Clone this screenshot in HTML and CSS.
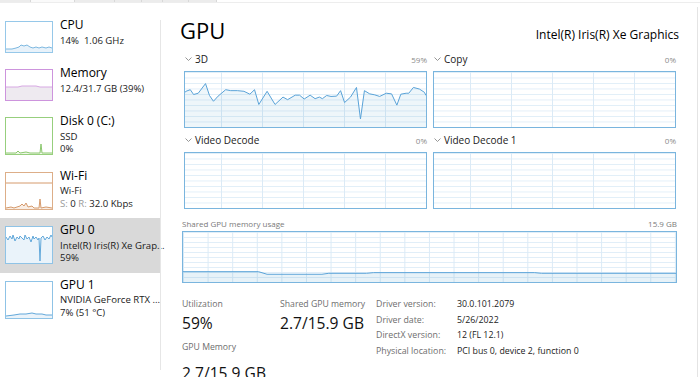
FILE: index.html
```html
<!DOCTYPE html>
<html lang="en">
<head>
    <meta charset="UTF-8">
    <meta name="viewport" content="width=device-width, initial-scale=1.0">
    <title>Task Manager - Performance - GPU</title>
    <link rel="stylesheet" href="styles.css">
</head>
<body>
    <div class="tabs">
        <span></span><span></span><span></span><span></span><span></span><span></span><span></span>
    </div>
    <div class="window">
        <aside class="sidebar">
            <ul class="perf-list">
                <li class="perf-item">
                    <div class="thumb thumb-cpu">
                        <svg viewBox="0 0 46 30" preserveAspectRatio="none">
                            <polygon class="fill" points="0,27 6,27 10,26 13,25 15,23 18,24 21,23 24,25 27,26 30,25 33,26 36,25 40,26 43,25 46,26 46,30 0,30"/>
                            <polyline class="line" points="0,27 6,27 10,26 13,25 15,23 18,24 21,23 24,25 27,26 30,25 33,26 36,25 40,26 43,25 46,26"/>
                        </svg>
                    </div>
                    <div class="perf-text">
                        <div class="perf-name">CPU</div>
                        <div class="perf-sub">14%&nbsp; 1.06 GHz</div>
                    </div>
                </li>
                <li class="perf-item">
                    <div class="thumb thumb-mem">
                        <svg viewBox="0 0 46 30" preserveAspectRatio="none">
                            <polygon class="fill" points="0,17 12,17 16,16 30,16 34,17 46,17 46,30 0,30"/>
                            <polyline class="line" points="0,17 12,17 16,16 30,16 34,17 46,17"/>
                        </svg>
                    </div>
                    <div class="perf-text">
                        <div class="perf-name">Memory</div>
                        <div class="perf-sub">12.4/31.7 GB (39%)</div>
                    </div>
                </li>
                <li class="perf-item tall">
                    <div class="thumb thumb-disk">
                        <svg viewBox="0 0 46 36" preserveAspectRatio="none">
                            <polygon class="fill" points="0,35 10,35 12,33 14,35 20,34 24,35 34,35 35,26 36,35 46,35 46,36 0,36"/>
                            <polyline class="line" points="0,35 10,35 12,33 14,35 20,34 24,35 34,35 35,26 36,35 46,35"/>
                        </svg>
                    </div>
                    <div class="perf-text">
                        <div class="perf-name">Disk 0 (C:)</div>
                        <div class="perf-sub">SSD</div>
                        <div class="perf-sub">0%</div>
                    </div>
                </li>
                <li class="perf-item tall">
                    <div class="thumb thumb-wifi">
                        <svg viewBox="0 0 46 36" preserveAspectRatio="none">
                            <line class="line" x1="0" y1="10" x2="46" y2="10"/>
                            <polygon class="fill" points="0,35 5,34 8,35 14,33 16,31 18,33 20,30 22,34 26,33 28,35 33,35 34,26 35,35 40,34 46,35 46,36 0,36"/>
                            <polyline class="line" points="0,35 5,34 8,35 14,33 16,31 18,33 20,30 22,34 26,33 28,35 33,35 34,26 35,35 40,34 46,35"/>
                        </svg>
                    </div>
                    <div class="perf-text">
                        <div class="perf-name">Wi-Fi</div>
                        <div class="perf-sub">Wi-Fi</div>
                        <div class="perf-sub"><span class="dim">S:</span> 0 <span class="dim">R:</span> 32.0 Kbps</div>
                    </div>
                </li>
                <li class="perf-item tall selected">
                    <div class="thumb thumb-gpu">
                        <svg viewBox="0 0 46 36" preserveAspectRatio="none">
                            <polygon class="fill" points="0,10 2,13 4,9 6,12 7,8 9,14 11,10 13,12 14,9 16,11 18,13 19,8 21,12 23,10 25,15 27,9 28,12 30,10 32,13 33,11 34,34 35,11 37,9 39,13 41,10 43,12 45,8 46,10 46,36 0,36"/>
                            <polyline class="line" points="0,10 2,13 4,9 6,12 7,8 9,14 11,10 13,12 14,9 16,11 18,13 19,8 21,12 23,10 25,15 27,9 28,12 30,10 32,13 33,11 34,34 35,11 37,9 39,13 41,10 43,12 45,8 46,10"/>
                        </svg>
                    </div>
                    <div class="perf-text">
                        <div class="perf-name">GPU 0</div>
                        <div class="perf-sub">Intel(R) Iris(R) Xe Grap...</div>
                        <div class="perf-sub">59%</div>
                    </div>
                </li>
                <li class="perf-item tall">
                    <div class="thumb thumb-gpu">
                        <svg viewBox="0 0 46 36" preserveAspectRatio="none">
                            <polygon class="fill" points="0,34 8,33 14,32 20,32 26,31 30,32 36,32 40,33 46,33 46,36 0,36"/>
                            <polyline class="line" points="0,34 8,33 14,32 20,32 26,31 30,32 36,32 40,33 46,33"/>
                        </svg>
                    </div>
                    <div class="perf-text">
                        <div class="perf-name">GPU 1</div>
                        <div class="perf-sub">NVIDIA GeForce RTX ...</div>
                        <div class="perf-sub">7% (51 °C)</div>
                    </div>
                </li>
            </ul>
        </aside>
        <div class="divider"></div>
        <main class="detail">
            <div class="head">
                <h1>GPU</h1>
                <span class="gpu-name">Intel(R) Iris(R) Xe Graphics</span>
            </div>
            <div class="charts">
                <div class="chart">
                    <div class="chart-head">
                        <svg class="chevron" viewBox="0 0 7 4"><path d="M0.5 0.5 L3.5 3.5 L6.5 0.5"/></svg>
                        <span class="chart-name">3D</span>
                        <span class="pct">59%</span>
                    </div>
                    <div class="graph">
                        <svg viewBox="72 212 728 171" preserveAspectRatio="none">
                            <polygon class="fill" points="72,275 75,272 88,267 98,282 112,278 134,248 146,285 158,303 172,287 195,267 210,270 230,270 250,272 268,281 282,267 295,313 320,272 344,313 368,290 382,298 405,284 418,284 432,296 450,284 465,295 478,290 487,295 500,285 513,288 530,287 542,270 554,307 572,290 590,260 602,358 614,270 630,280 645,283 660,288 680,278 696,280 712,315 724,281 740,278 748,278 762,260 780,265 795,275 800,285 800,383 72,383"/>
                            <polyline class="line" points="72,275 75,272 88,267 98,282 112,278 134,248 146,285 158,303 172,287 195,267 210,270 230,270 250,272 268,281 282,267 295,313 320,272 344,313 368,290 382,298 405,284 418,284 432,296 450,284 465,295 478,290 487,295 500,285 513,288 530,287 542,270 554,307 572,290 590,260 602,358 614,270 630,280 645,283 660,288 680,278 696,280 712,315 724,281 740,278 748,278 762,260 780,265 795,275 800,285"/>
                        </svg>
                    </div>
                </div>
                <div class="chart">
                    <div class="chart-head">
                        <svg class="chevron" viewBox="0 0 7 4"><path d="M0.5 0.5 L3.5 3.5 L6.5 0.5"/></svg>
                        <span class="chart-name">Copy</span>
                        <span class="pct">0%</span>
                    </div>
                    <div class="graph"></div>
                </div>
                <div class="chart">
                    <div class="chart-head">
                        <svg class="chevron" viewBox="0 0 7 4"><path d="M0.5 0.5 L3.5 3.5 L6.5 0.5"/></svg>
                        <span class="chart-name">Video Decode</span>
                        <span class="pct">0%</span>
                    </div>
                    <div class="graph"></div>
                </div>
                <div class="chart">
                    <div class="chart-head">
                        <svg class="chevron" viewBox="0 0 7 4"><path d="M0.5 0.5 L3.5 3.5 L6.5 0.5"/></svg>
                        <span class="chart-name">Video Decode 1</span>
                        <span class="pct">0%</span>
                    </div>
                    <div class="graph"></div>
                </div>
            </div>
            <div class="mem-head">
                <span>Shared GPU memory usage</span>
                <span>15.9 GB</span>
            </div>
            <div class="graph mem-graph">
                <svg viewBox="65 65 1437 155" preserveAspectRatio="none">
                    <polygon class="fill" points="65,188 285,188 310,196 470,196 490,193 600,193 620,191 1090,191 1110,193 1502,193 1502,220 65,220"/>
                    <polyline class="line" points="65,188 285,188 310,196 470,196 490,193 600,193 620,191 1090,191 1110,193 1502,193"/>
                </svg>
            </div>
            <div class="stats">
                <div class="stat-col first">
                    <div class="stat-label">Utilization</div>
                    <div class="stat-value">59%</div>
                    <div class="stat-label gap">GPU Memory</div>
                    <div class="stat-value gap-lg">2.7/15.9 GB</div>
                </div>
                <div class="stat-col second">
                    <div class="stat-label">Shared GPU memory</div>
                    <div class="stat-value">2.7/15.9 GB</div>
                </div>
                <dl class="driver">
                    <dt>Driver version:</dt><dd>30.0.101.2079</dd>
                    <dt>Driver date:</dt><dd>5/26/2022</dd>
                    <dt>DirectX version:</dt><dd>12 (FL 12.1)</dd>
                    <dt>Physical location:</dt><dd>PCI bus 0, device 2, function 0</dd>
                </dl>
            </div>
        </main>
        <div class="edge"></div>
    </div>
</body>
</html>
```

FILE: styles.css
```css
* {
    box-sizing: border-box;
}
body {
    margin: 0;
    width: 700px;
    height: 377px;
    overflow: hidden;
    background: #fff;
    color: #000;
    font-family: "Open Sans", "Noto Sans", sans-serif;
}
svg {
    display: block;
}
.tabs {
    display: flex;
    height: 3px;
    border-bottom: 1px solid #ededed;
}
.tabs span {
    height: 2px;
    background: #ececec;
    border-right: 1px solid #d8d8d8;
}
.tabs span:nth-child(1) { width: 31px; }
.tabs span:nth-child(2) { width: 44px; background: #fafafa; }
.tabs span:nth-child(3) { width: 40px; }
.tabs span:nth-child(4) { width: 27px; }
.tabs span:nth-child(5) { width: 21px; }
.tabs span:nth-child(6) { width: 26px; }
.tabs span:nth-child(7) { width: 28px; }

.window {
    display: flex;
    height: 374px;
}

/* left list */
.sidebar {
    width: 160px;
    padding-top: 10px;
}
.perf-list {
    list-style: none;
    margin: 0;
    padding: 0;
}
.perf-item {
    display: flex;
    gap: 7px;
    padding: 8px 0 8px 5px;
}
.perf-item.selected {
    background: #d9d9d9;
}
.thumb {
    flex: none;
    width: 48px;
    height: 32px;
    border: 1px solid;
    background: #fff;
}
.perf-item.tall .thumb {
    height: 38px;
}
.thumb svg {
    width: 100%;
    height: 100%;
}
.thumb .line, .graph .line {
    fill: none;
    stroke-width: 1;
    vector-effect: non-scaling-stroke;
}
.thumb-cpu { border-color: #96c8e9; }
.thumb-cpu .line { stroke: #7db8e0; }
.thumb-cpu .fill { fill: #e8f2fa; }
.thumb-mem { border-color: #cd94dd; }
.thumb-mem .line { stroke: #d7a8e3; }
.thumb-mem .fill { fill: #eeeaf0; }
.thumb-disk { border-color: #97cf7d; }
.thumb-disk .line { stroke: #8cc86f; }
.thumb-disk .fill { fill: #eef7e8; }
.thumb-wifi { border-color: #ddae88; }
.thumb-wifi .line { stroke: #d59a6c; }
.thumb-wifi .fill { fill: #f9eee5; }
.thumb-gpu { border-color: #8fc3e6; }
.thumb-gpu .line { stroke: #62a8da; }
.thumb-gpu .fill { fill: #eaf3fa; }

.perf-text {
    min-width: 0;
    margin-top: -4px;
}
.perf-name {
    font-size: 12px;
    line-height: 16px;
}
.perf-sub {
    font-size: 9.6px;
    line-height: 12.5px;
    color: #1a1a1a;
    white-space: nowrap;
}
.perf-name + .perf-sub {
    margin-top: 1.5px;
}
.dim {
    color: #9a9a9a;
}

.divider {
    width: 1px;
    background: #e6e6e6;
    margin: 17px 0 7px 0;
}
.edge {
    width: 1px;
    background: #e4e4e4;
    margin-top: 4px;
}

/* right detail */
.detail {
    width: 536px;
    padding: 0 20px 0 21px;
}
.head {
    height: 44px;
    display: flex;
    justify-content: space-between;
    align-items: baseline;
}
.head h1 {
    margin: 12px 0 0 -2px;
    font-size: 22px;
    line-height: 30px;
    font-weight: 400;
}
.gpu-name {
    font-size: 12px;
    margin-right: -2px;
}
.charts {
    display: grid;
    grid-template-columns: 1fr 1fr;
    column-gap: 6px;
    margin: 0 1px 0 2px;
}
.chart-head {
    height: 24px;
    display: flex;
    align-items: center;
    gap: 3px;
}
.chevron {
    width: 7px;
    height: 4px;
    margin-left: 1px;
}
.chevron path {
    fill: none;
    stroke: #8a8a8a;
    stroke-width: 0.9;
}
.chart-name {
    font-size: 10px;
    color: #1a1a1a;
}
.pct {
    margin-left: auto;
    font-size: 8px;
    color: #8a8a8a;
}
.graph {
    height: 57px;
    border: 1px solid #7ab5de;
    background-color: #fff;
    background-image:
        linear-gradient(to right, #dbeaf6 1px, transparent 1px),
        linear-gradient(to bottom, #e1eef8 1px, transparent 1px);
    background-size: 41px 100%, 100% 10%;
    background-position: 36px 0, 0 0;
}
.graph svg {
    width: 100%;
    height: 100%;
}
.graph .line {
    stroke: #5aa3d8;
}
.graph .fill {
    fill: rgba(17, 125, 187, 0.07);
}
.mem-head {
    height: 22px;
    padding-top: 7px;
    display: flex;
    justify-content: space-between;
    font-size: 8px;
    line-height: 15px;
    color: #7a7a7a;
}
.mem-graph {
    height: 52px;
    background-size: 24.6px 100%, 100% 10%;
    background-position: 0 0, 0 0;
}
.mem-graph .fill {
    fill: rgba(17, 125, 187, 0.1);
}

.stats {
    display: flex;
    align-items: flex-start;
    margin-top: 14px;
}
.stat-col.first {
    width: 98px;
}
.stat-col.second {
    width: 96px;
}
.stat-label {
    font-size: 8.7px;
    line-height: 15px;
    color: #6e6e6e;
}
.stat-value {
    font-size: 15.6px;
    line-height: 22px;
    color: #111;
}
.stat-label.gap {
    margin-top: 6px;
}
.stat-value.gap-lg {
    margin-top: 6.5px;
}
.driver {
    margin: 0;
    display: grid;
    grid-template-columns: 81px auto;
    align-content: start;
    font-size: 8.8px;
    line-height: 15.6px;
}
.driver dt {
    color: #6e6e6e;
}
.driver dd {
    margin: 0;
    color: #1b1b1b;
}
```
